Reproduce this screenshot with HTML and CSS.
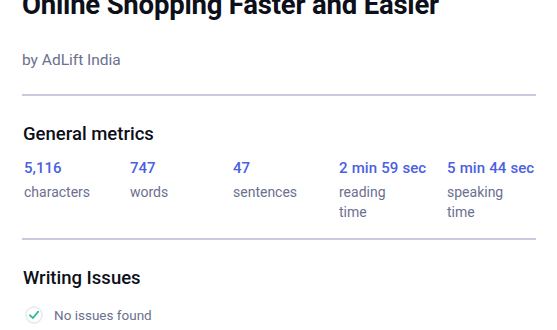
FILE: index.html
```html
<!DOCTYPE html>
<html>
<head>
<meta charset="utf-8">
<link rel="stylesheet" href="styles.css">
</head>
<body>
<div class="page">
  <h1 class="title">Online Shopping Faster and Easier</h1>
  <div class="author">by AdLift India</div>
  <hr class="rule">
  <h2 class="section-title">General metrics</h2>
  <div class="metrics">
    <div class="metric"><div class="value">5,116</div><div class="label">characters</div></div>
    <div class="metric"><div class="value">747</div><div class="label">words</div></div>
    <div class="metric"><div class="value">47</div><div class="label">sentences</div></div>
    <div class="metric"><div class="value">2 min 59 sec</div><div class="label">reading<br>time</div></div>
    <div class="metric"><div class="value">5 min 44 sec</div><div class="label">speaking<br>time</div></div>
  </div>
  <hr class="rule rule2">
  <h2 class="section-title issues-title">Writing Issues</h2>
  <div class="issue">
    <span class="check"><svg width="18" height="18" viewBox="0 0 18 18"><circle cx="9" cy="9" r="8" fill="none" stroke="#e6e8f2" stroke-width="1.5"/><path d="M5 9.3 L8 12 L13.2 5.6" fill="none" stroke="#2bbf8a" stroke-width="1.8" stroke-linecap="round" stroke-linejoin="round"/></svg></span>
    <span class="issue-text">No issues found</span>
  </div>
</div>
</body>
</html>
```
FILE: styles.css
```css
html, body { margin: 0; padding: 0; background: #fff; overflow: hidden; }
body { font-family: Roboto, "Liberation Sans", sans-serif; }
.page { padding: 0 21px 0 22px; }
.title { margin: -12px 0 0 0; font-size: 27.5px; line-height: 34px; font-weight: 700; color: #0d0f1a; letter-spacing: -0.2px; white-space: nowrap; }
.author { margin-top: 28px; font-size: 15.5px; line-height: 20px; color: #6b7090; }
.rule { border: 0; height: 2px; background: #c9cbdc; margin: 24px 0 0 0; }
.section-title { margin: 26px 0 0 1px; font-size: 18.5px; line-height: 24px; font-weight: 500; color: #0d0f1a; }
.metrics { display: grid; grid-template-columns: 106px 103px 106px 108px 100px; margin-top: 12px; padding-left: 2px; }
.value { font-size: 15px; line-height: 20px; font-weight: 500; color: #4a60e2; word-spacing: 0.5px; white-space: nowrap; }
.label { margin-top: 4px; font-size: 14px; line-height: 20px; color: #6b7090; }
.rule2 { margin-top: 16px; }
.issues-title { margin-top: 26px; }
.issue { display: flex; align-items: center; margin-top: 15px; padding-left: 3px; }
.check { display: flex; width: 18px; height: 18px; }
.issue-text { margin-left: 11px; font-size: 13.5px; line-height: 20px; color: #6b7090; }
```
